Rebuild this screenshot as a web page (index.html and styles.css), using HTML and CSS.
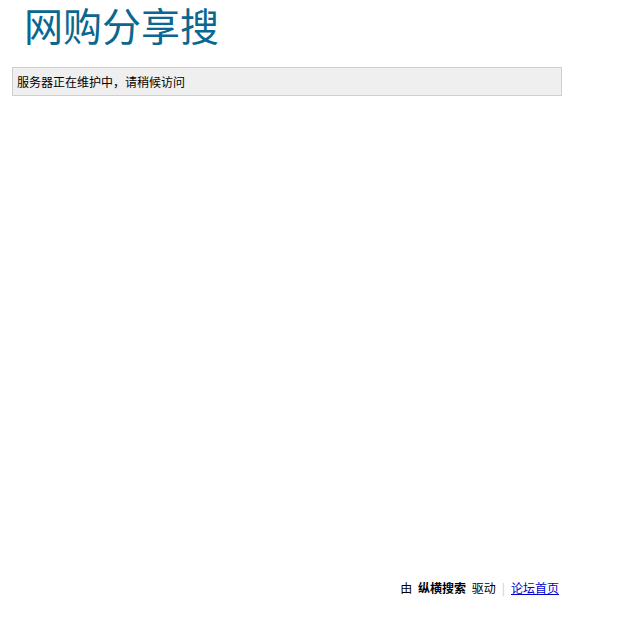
FILE: index.html
```html
<!DOCTYPE html>
<html lang="zh-CN">
<head>
    <meta charset="UTF-8">
    <title>网购分享搜</title>
    <link rel="stylesheet" href="styles.css">
</head>
<body>
    <div class="wrap">
        <div class="header">
            <h1 class="logo">网购分享搜</h1>
        </div>
        <div class="notice">服务器正在维护中，请稍候访问</div>
        <div class="footer">
            由 <strong>纵横搜索</strong> 驱动<span class="pipe">|</span><a href="#">论坛首页</a>
        </div>
    </div>
</body>
</html>
```

FILE: styles.css
```css
body {
    margin: 0;
    background: #fff;
    font-family: "Noto Sans CJK SC", "DejaVu Sans", sans-serif;
    font-size: 12px;
    color: #000;
}

.wrap {
    width: 550px;
    padding: 0 12px;
}

.header {
    height: 67px;
}

.logo {
    margin: 0;
    padding: 0 0 0 12px;
    font-family: "Noto Sans CJK SC", serif;
    font-weight: normal;
    font-size: 39px;
    line-height: 48px;
    color: #0a6790;
}

.notice {
    height: 27px;
    line-height: 28px;
    padding: 0 4px;
    background: #efefef;
    border: 1px solid #cfcfcf;
}

.footer {
    margin-top: 482px;
    padding-right: 3px;
    text-align: right;
    line-height: 20px;
}

.footer strong {
    font-weight: bold;
    margin: 0 3px;
}

.pipe {
    color: #ccc;
    margin: 0 6px;
}

.footer a {
    color: #00c;
}
```
